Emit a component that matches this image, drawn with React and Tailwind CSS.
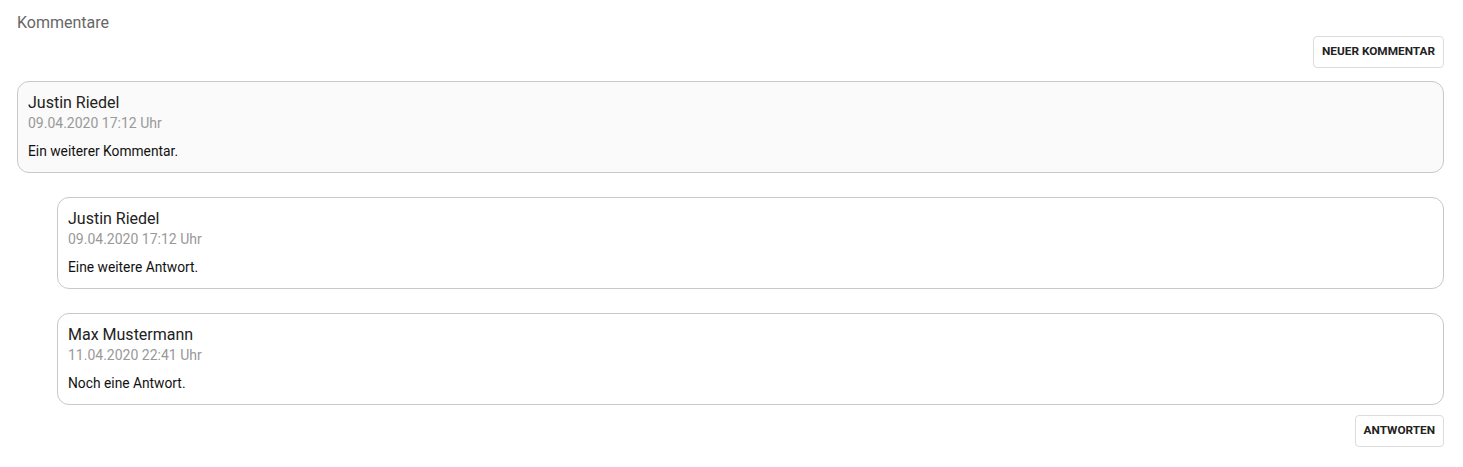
const font = { fontFamily: 'Roboto, "Liberation Sans", sans-serif' };

const comment = { author: 'Justin Riedel', date: '09.04.2020 17:12 Uhr', text: 'Ein weiterer Kommentar.' };
const replies = [
  { author: 'Justin Riedel', date: '09.04.2020 17:12 Uhr', text: 'Eine weitere Antwort.' },
  { author: 'Max Mustermann', date: '11.04.2020 22:41 Uhr', text: 'Noch eine Antwort.' },
];

function Card({ c, root }) {
  return (
    <div className={`rounded-xl border border-[#c8c8c8] px-[10px] pt-[10px] h-[92px] ${root ? 'bg-[#fafafa]' : 'bg-white'}`}>
      <div className="text-[16px] leading-[22px] text-[#222]">{c.author}</div>
      <div className="text-[14px] leading-[19px] text-[#999]">{c.date}</div>
      <div className="text-[13.8px] leading-[20px] text-[#111] mt-[8px]">{c.text}</div>
    </div>
  );
}

function Btn({ children }) {
  return (
    <button className="h-[32px] px-[8px] rounded border border-[#dcdcdc] bg-white text-[11.8px] font-bold uppercase text-[#222]">
      {children}
    </button>
  );
}

export default function App() {
  return (
    <div className="bg-white w-[1463px] h-[467px] pl-[17px] pr-[19px] pt-[12px]" style={font}>
      <div className="text-[16px] leading-[22px] text-[#666]">Kommentare</div>
      <div className="flex justify-end mt-[2px]">
        <Btn>Neuer Kommentar</Btn>
      </div>
      <div className="mt-[13px]">
        <Card c={comment} root />
      </div>
      <div className="pl-[40px] mt-[24px] flex flex-col gap-[24px]">
        {replies.map((r, i) => <Card key={i} c={r} />)}
      </div>
      <div className="flex justify-end mt-[10px]">
        <Btn>Antworten</Btn>
      </div>
    </div>
  );
}
